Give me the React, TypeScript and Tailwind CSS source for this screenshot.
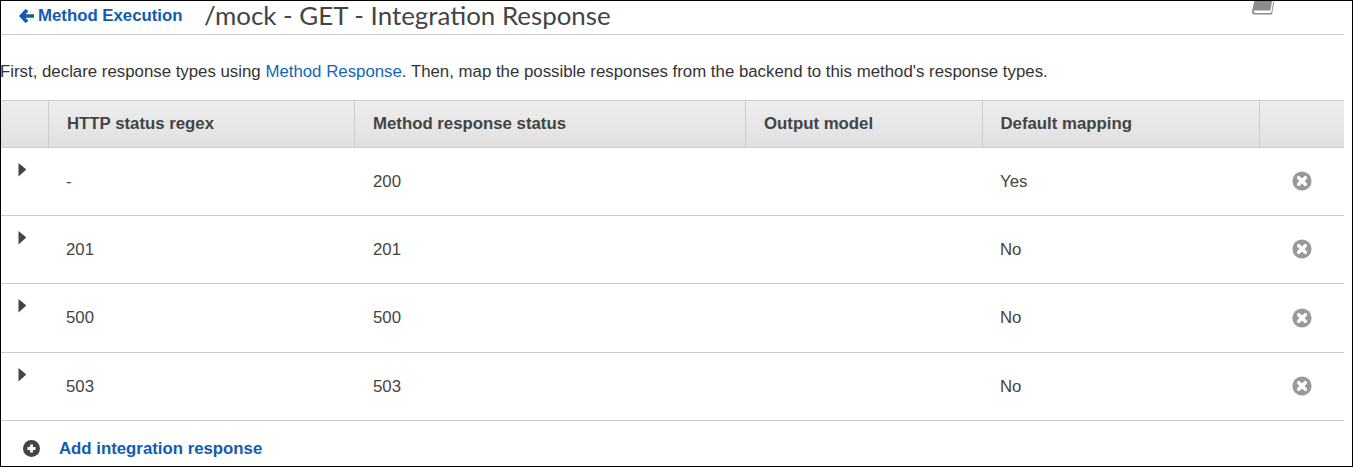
const rows = [
  { cells: ["-", "200", "Yes"], h: "h-[68px]" },
  { cells: ["201", "201", "No"], h: "h-[68px]" },
  { cells: ["500", "500", "No"], h: "h-[69px]" },
  { cells: ["503", "503", "No"], h: "h-[68px]" },
];

function Caret() {
  return (
    <svg width="8" height="14" viewBox="0 0 8 14" className="block">
      <path d="M0.5 0 L7.8 6 L7.8 7 L0.5 13.5 Z" fill="#444444" />
    </svg>
  );
}

function RemoveIcon() {
  return (
    <svg width="20" height="20" viewBox="0 0 20 20" className="block">
      <circle cx="10" cy="10" r="9.6" fill="#999999" />
      <path d="M6.7 6.7 L13.3 13.3 M13.3 6.7 L6.7 13.3" stroke="#ffffff" strokeWidth="3.6" strokeLinecap="round" />
    </svg>
  );
}

function AddIcon() {
  return (
    <svg width="17" height="17" viewBox="0 0 17 17" className="block">
      <circle cx="8.5" cy="8.5" r="8.5" fill="#444444" />
      <path d="M8.5 4.5 V12.5 M4.5 8.5 H12.5" stroke="#ffffff" strokeWidth="2.8" />
    </svg>
  );
}

function BookIcon() {
  return (
    <svg width="26" height="16" viewBox="0 0 26 16" className="block">
      <path d="M5 -6 L24.5 -6 L21 14.5 L3.5 14.5 C1.5 14.5 0.5 13 1 11 Z" fill="#8c8c8c" />
      <path d="M2.8 11 C2.2 12.3 3 13 4.5 13 L19.5 13 L20 10.5 L3 10.5 Z" fill="#ffffff" />
      <path d="M22.5 -4 L19.8 12.5" stroke="#ffffff" strokeWidth="1.3" fill="none" />
    </svg>
  );
}

export default function App() {
  return (
    <div className="w-[1353px] h-[467px] bg-white border border-black overflow-hidden font-['Liberation_Sans',Arial,sans-serif] text-[#444444] text-[16.8px]">
      <div className="w-[1343px] h-[34px] border-b border-[#cccccc] flex items-center relative">
        <a className="ml-[18px] flex items-center gap-[4px] text-[#0f5cb0] font-bold w-[185px] mt-[-3px]">
          <svg width="15" height="16" viewBox="0 0 15 16" className="block">
            <path d="M8 2 L2.5 8 L8 14 M3 8 H15" stroke="#0f5cb0" strokeWidth="3.6" fill="none" />
          </svg>
          Method Execution
        </a>
        <h1 className="font-['Lato',sans-serif] text-[25.9px] font-normal text-[#444444] mt-[-6px] leading-[28px] whitespace-nowrap">/mock - GET - Integration Response</h1>
        <div className="absolute left-[1250px] top-[-1px]">
          <BookIcon />
        </div>
      </div>
      <p className="h-[65px] pt-[28px] ml-[-1px] text-[16.82px] leading-[18px] text-[#333333] whitespace-nowrap">
        First, declare response types using <a className="text-[#1166bb]">Method Response</a>. Then, map the possible responses from the backend to this method's response types.
      </p>
      <div className="w-[1343px]">
        <div className="h-[48px] flex border-y border-[#cccccc] bg-gradient-to-b from-[#eeeeee] to-[#e0e0e0] font-bold text-[#444444]">
          <div className="w-[48px] border-r border-[#cccccc]" />
          <div className="w-[306px] border-r border-[#cccccc] pl-[18px] flex items-center">HTTP status regex</div>
          <div className="w-[391px] border-r border-[#cccccc] pl-[18px] flex items-center">Method response status</div>
          <div className="w-[237px] border-r border-[#cccccc] pl-[18px] flex items-center">Output model</div>
          <div className="w-[277px] border-r border-[#cccccc] pl-[17.5px] flex items-center">Default mapping</div>
        </div>
        {rows.map((r, i) => (
          <div key={i} className={`${r.h} flex items-center border-b border-[#cccccc]`}>
            <div className="w-[48px] h-full pl-[17px] pt-[15px]">
              <Caret />
            </div>
            <div className="w-[306px] pl-[17px]">{r.cells[0]}</div>
            <div className="w-[391px] pl-[18px]">{r.cells[1]}</div>
            <div className="w-[237px]" />
            <div className="w-[277px] pl-[17px]">{r.cells[2]}</div>
            <div className="pl-[32px] mt-[-1px]">
              <RemoveIcon />
            </div>
          </div>
        ))}
        <div className="h-[46px] flex items-center pt-[9px]">
          <div className="ml-[22px]"><AddIcon /></div>
          <a className="ml-[19px] text-[#0f5cb0] font-bold">Add integration response</a>
        </div>
      </div>
    </div>
  );
}
